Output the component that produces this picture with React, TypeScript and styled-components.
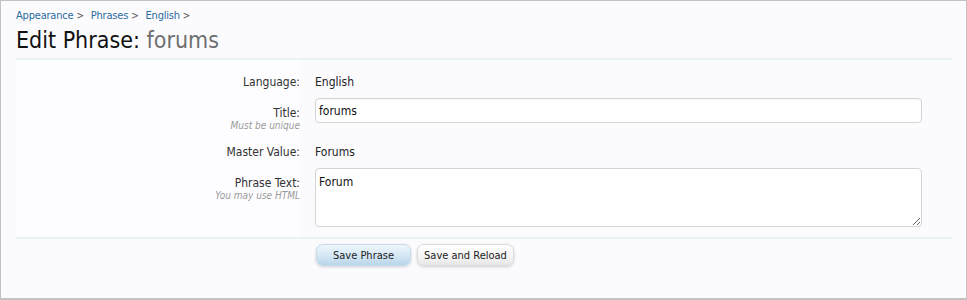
import React from "react";
import styled, { createGlobalStyle } from "styled-components";

const Global = createGlobalStyle`
  html, body { margin: 0; padding: 0; background: #fcfcff; }
  * { box-sizing: border-box; }
`;

const Frame = styled.div`
  width: 967px;
  height: 300px;
  border: 1px solid #c2c2c2;
  border-bottom-width: 2px;
  background: #fbfbfe;
  font-family: "DejaVu Sans Condensed", "DejaVu Sans", sans-serif;
  font-size: 11px;
  color: #222;
  padding: 0 14px 0 15px;
  overflow: hidden;
`;

const Crumbs = styled.nav`
  display: flex;
  gap: 7px;
  padding-top: 6px;
  height: 22px;
  align-items: center;
`;

const Crumb = styled.a`
  color: #2b6b9c;
  text-decoration: none;
  font-size: 11px;
  letter-spacing: -0.2px;
  &::after {
    content: ">";
    color: #555;
    margin-left: 3px;
    font-size: 10px;
  }
`;

const Title = styled.h1`
  margin: 0;
  font-weight: normal;
  font-size: 23px;
  line-height: 30px;
  color: #111;
  padding-top: 2px;
  height: 35px;
  span { color: #6f6f6f; }
`;

const Rule = styled.hr`
  margin: 0;
  border: 0;
  height: 2px;
  background: #e8f1f3;
  width: 936px;
`;

const Form = styled.div`
  display: grid;
  grid-template-columns: 284px 1fr;
  column-gap: 15px;
  width: 936px;
`;

const Label = styled.div<{ $pt: number }>`
  text-align: right;
  font-size: 12px;
  color: #333;
  padding-top: ${(p) => p.$pt}px;
  background: #fdfdff;
`;

const Hint = styled.div`
  font-size: 10px;
  font-style: italic;
  color: #9a9a9a;
  margin-top: 0;
`;

const Value = styled.div<{ $pt: number; $h: number }>`
  font-size: 12px;
  color: #222;
  padding-top: ${(p) => p.$pt}px;
  height: ${(p) => p.$h}px;
`;

const Field = styled.div<{ $h: number }>`
  height: ${(p) => p.$h}px;
`;

const Input = styled.input`
  width: 607px;
  height: 25px;
  border: 1px solid #d4d4d4;
  border-radius: 4px;
  background: #fff;
  font-family: inherit;
  font-size: 12px;
  color: #111;
  padding: 0 3px;
  outline: none;
  box-shadow: inset 0 1px 1px rgba(0,0,0,0.04);
`;

const TextArea = styled.textarea`
  width: 607px;
  height: 59px;
  border: 1px solid #d4d4d4;
  border-radius: 4px;
  background: #fff;
  font-family: inherit;
  font-size: 12px;
  color: #111;
  padding: 6px 3px;
  resize: vertical;
  outline: none;
  display: block;
`;

const Buttons = styled.div`
  display: flex;
  gap: 6px;
  padding: 5px 0 0 300px;
`;

const Button = styled.button<{ $primary?: boolean }>`
  height: 22px;
  padding: 0;
  width: ${(p) => (p.$primary ? 95 : 97)}px;
  border: 1px solid ${(p) => (p.$primary ? "#c6dcec" : "#dcdcdc")};
  border-radius: 7px;
  font-family: inherit;
  font-size: 11px;
  color: #222;
  background: ${(p) =>
    p.$primary
      ? "linear-gradient(to bottom, #eef6fb 0%, #d6e8f4 50%, #b9d6ea 100%)"
      : "linear-gradient(to bottom, #ffffff 0%, #f5f5f5 55%, #e6e6e6 100%)"};
  box-shadow: 0 1px 3px rgba(0,0,0,0.18);
`;

export default function App() {
  return (
    <>
      <Global />
      <Frame>
        <Crumbs>
          <Crumb href="#">Appearance</Crumb>
          <Crumb href="#">Phrases</Crumb>
          <Crumb href="#">English</Crumb>
        </Crumbs>
        <Title>
          Edit Phrase: <span>forums</span>
        </Title>
        <Rule />
        <Form>
          <Label $pt={15}>Language:</Label>
          <Value $pt={15} $h={38}>English</Value>

          <Label $pt={8}>
            Title:
            <Hint>Must be unique</Hint>
          </Label>
          <Field $h={41}>
            <Input defaultValue="forums" />
          </Field>

          <Label $pt={6}>Master Value:</Label>
          <Value $pt={6} $h={29}>Forums</Value>

          <Label $pt={8}>
            Phrase Text:
            <Hint>You may use HTML</Hint>
          </Label>
          <Field $h={69}>
            <TextArea defaultValue="Forum" />
          </Field>
        </Form>
        <Rule />
        <Buttons>
          <Button $primary>Save Phrase</Button>
          <Button>Save and Reload</Button>
        </Buttons>
      </Frame>
    </>
  );
}
